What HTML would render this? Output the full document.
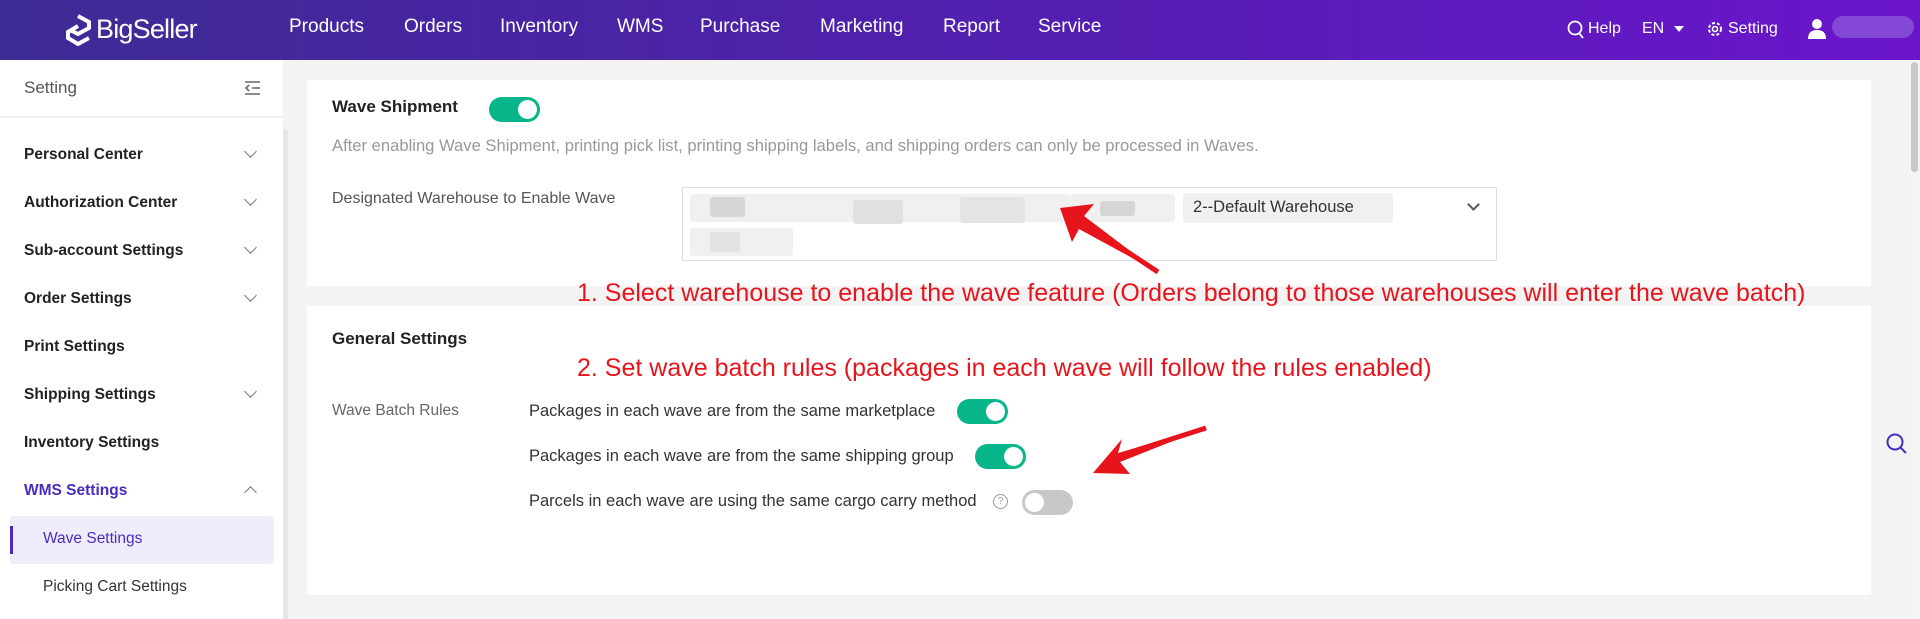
<!DOCTYPE html>
<html style="width:1920px;height:619px;overflow:hidden"><head><meta charset="utf-8"><style>
*{margin:0;padding:0;box-sizing:border-box}
body{width:1920px;height:619px;overflow:hidden;background:#f3f3f3;font-family:"Liberation Sans",sans-serif;position:relative;color:#333}
.abs{position:absolute;white-space:nowrap}
#top{position:absolute;left:0;top:0;width:1920px;height:60px;background:linear-gradient(90deg,#3e2b95 0%,#4c22a8 40%,#6a15cb 100%)}
.nav{position:absolute;top:16px;color:#fff;font-size:19px}
#side{position:absolute;left:0;top:60px;width:283px;height:559px;background:#fff;overflow:hidden}
.mi{position:absolute;left:24px;font-size:15.5px;font-weight:bold;color:#222}
.chev{position:absolute;left:246px;width:9px;height:9px;border-right:1.5px solid #777;border-bottom:1.5px solid #777;transform:rotate(45deg)}
.card{position:absolute;left:307px;width:1564px;background:#fff}
.tg{position:absolute;width:51px;height:25px;border-radius:13px;background:#06b58a}
.tg::after{content:"";position:absolute;right:3px;top:3px;width:19px;height:19px;border-radius:50%;background:#fff}
.tg.off{background:#c8c8c8}
.tg.off::after{left:3px;right:auto}
.red{position:absolute;color:#e8141c;font-size:25px;left:577px;white-space:nowrap}
.rule{position:absolute;left:529px;font-size:16.5px;color:#333}
.blk{position:absolute;background:#eee;border-radius:3px}
</style></head><body>
<div id="top">
<svg class="abs" style="left:64px;top:14px" width="28" height="32" viewBox="0 0 28 32"><path d="M14 2 L25 8 L25 14 L14 20 L8 17 M14 12 L4 18 L4 24 L14 30 L25 24" fill="none" stroke="#fff" stroke-width="4"/></svg>
<div class="abs" style="left:96px;top:14px;color:#fff;font-size:27px;letter-spacing:-0.8px">BigSeller</div>
<div class="nav" style="left:289px">Products</div>
<div class="nav" style="left:404px">Orders</div>
<div class="nav" style="left:500px">Inventory</div>
<div class="nav" style="left:617px">WMS</div>
<div class="nav" style="left:700px">Purchase</div>
<div class="nav" style="left:820px">Marketing</div>
<div class="nav" style="left:943px">Report</div>
<div class="nav" style="left:1038px">Service</div>
<svg class="abs" style="left:1567px;top:20px" width="18" height="20"><circle cx="8" cy="8" r="6.5" fill="none" stroke="#fff" stroke-width="1.8"/><path d="M12 13 L16 18" stroke="#fff" stroke-width="1.8"/></svg>
<div class="abs" style="left:1588px;top:20px;color:#fff;font-size:16px">Help</div>
<div class="abs" style="left:1642px;top:20px;color:#fff;font-size:16px">EN</div>
<div class="abs" style="left:1674px;top:26px;border-left:5px solid transparent;border-right:5px solid transparent;border-top:6px solid #fff"></div>
<svg class="abs" style="left:1706px;top:20px" width="18" height="18" viewBox="0 0 18 18"><circle cx="9" cy="9" r="6" fill="none" stroke="#fff" stroke-width="2" stroke-dasharray="3 2"/><circle cx="9" cy="9" r="2.5" fill="none" stroke="#fff" stroke-width="1.6"/></svg>
<div class="abs" style="left:1728px;top:20px;color:#fff;font-size:16px">Setting</div>
<svg class="abs" style="left:1807px;top:18px" width="20" height="22"><circle cx="10" cy="6" r="5" fill="#fff"/><path d="M1 21 Q1 12 10 12 Q19 12 19 21Z" fill="#fff"/></svg>
<div class="abs" style="left:1832px;top:16px;width:82px;height:22px;border-radius:11px;background:#8a55d8;opacity:.8"></div>
</div>
<div id="side">
<div class="abs" style="left:24px;top:18px;font-size:17px;color:#555">Setting</div>
<svg class="abs" style="left:244px;top:20px" width="18" height="16"><path d="M1 2H16M8 8H16M1 14H16M5 5L2 8L5 11" fill="none" stroke="#666" stroke-width="1.6"/></svg>
<div class="abs" style="left:0;top:56px;width:283px;height:2px;background:#f0f0f0"></div>
<div class="mi" style="top:86px">Personal Center</div><div class="chev" style="top:87px"></div>
<div class="mi" style="top:134px">Authorization Center</div><div class="chev" style="top:135px"></div>
<div class="mi" style="top:182px">Sub-account Settings</div><div class="chev" style="top:183px"></div>
<div class="mi" style="top:230px">Order Settings</div><div class="chev" style="top:231px"></div>
<div class="mi" style="top:278px">Print Settings</div>
<div class="mi" style="top:326px">Shipping Settings</div><div class="chev" style="top:327px"></div>
<div class="mi" style="top:374px">Inventory Settings</div>
<div class="mi" style="top:422px;color:#4a2bc2">WMS Settings</div><div class="chev" style="top:428px;transform:rotate(225deg)"></div>
<div class="abs" style="left:10px;top:456px;width:264px;height:48px;background:#efedfc;border-radius:4px"></div>
<div class="abs" style="left:10px;top:466px;width:3px;height:28px;background:#4a2bc2"></div>
<div class="abs" style="left:43px;top:470px;font-size:15.5px;color:#4a2bc2">Wave Settings</div>
<div class="abs" style="left:43px;top:518px;font-size:15.5px;color:#333">Picking Cart Settings</div>
</div>
<div class="abs" style="left:283px;top:130px;width:5px;height:489px;background:#e6e6e6"></div>
<div class="abs" style="left:1910px;top:60px;width:10px;height:559px;background:#f4f4f4"></div>
<div class="abs" style="left:1911px;top:62px;width:7px;height:110px;background:#c8c8c8;border-radius:4px"></div>
<svg class="abs" style="left:1885px;top:432px" width="24" height="24"><circle cx="10" cy="10" r="7.5" fill="none" stroke="#4a2bc2" stroke-width="2"/><path d="M15.5 15.5L21 21" stroke="#4a2bc2" stroke-width="2"/></svg>

<div class="card" style="top:80px;height:206px"></div>
<div class="card" style="top:306px;height:289px"></div>
<div class="abs" style="left:332px;top:97px;font-size:17px;font-weight:bold;color:#222">Wave Shipment</div>
<div class="tg" style="left:489px;top:97px"></div>
<div class="abs" style="left:332px;top:136px;font-size:16.6px;color:#999">After enabling Wave Shipment, printing pick list, printing shipping labels, and shipping orders can only be processed in Waves.</div>
<div class="abs" style="left:332px;top:190px;font-size:16px;color:#555">Designated Warehouse to Enable Wave</div>
<div class="abs" style="left:682px;top:187px;width:815px;height:74px;border:1px solid #ddd;background:#fff"></div>
<div class="blk" style="left:690px;top:194px;width:380px;height:28px;background:#f0f0f0"></div>
<div class="blk" style="left:710px;top:197px;width:35px;height:20px;background:#d6d6d6"></div>
<div class="blk" style="left:853px;top:200px;width:50px;height:24px;background:#e0e0e0"></div>
<div class="blk" style="left:960px;top:197px;width:65px;height:26px;background:#e4e4e4"></div>
<div class="blk" style="left:1070px;top:194px;width:105px;height:28px;background:#f0f0f0"></div>
<div class="blk" style="left:1100px;top:201px;width:35px;height:15px;background:#d6d6d6"></div>
<div class="blk" style="left:1183px;top:193px;width:210px;height:30px;background:#f0f0f0"></div>
<div class="abs" style="left:1193px;top:198px;font-size:16.5px;color:#333">2--Default Warehouse</div>
<div class="blk" style="left:690px;top:228px;width:103px;height:28px;background:#f0f0f0"></div>
<div class="blk" style="left:710px;top:232px;width:30px;height:20px;background:#e2e2e2"></div>
<div class="abs" style="left:1469px;top:200px;width:9px;height:9px;border-right:2px solid #555;border-bottom:2px solid #555;transform:rotate(45deg)"></div>

<div class="red" style="top:279px">1. Select warehouse to enable the wave feature (Orders belong to those warehouses will enter the wave batch)</div>
<svg class="abs" style="left:0;top:0" width="1920" height="619">
<path d="M1158 272 L1084 216 L1094 204 L1060 208 L1072 242 L1079 229 Z" fill="#e8141c"/>
<path d="M1158 272 L1079 220" stroke="#e8141c" stroke-width="5"/>
<path d="M1206 428 L1118 453 L1122 439 L1093 473 L1130 474 L1120 462 Z" fill="#e8141c"/>
<path d="M1206 428 L1112 458" stroke="#e8141c" stroke-width="5"/>
</svg>
<div class="abs" style="left:332px;top:329px;font-size:17px;font-weight:bold;color:#222">General Settings</div>
<div class="red" style="top:354px">2. Set wave batch rules (packages in each wave will follow the rules enabled)</div>
<div class="abs" style="left:332px;top:402px;font-size:15.5px;color:#666">Wave Batch Rules</div>
<div class="rule" style="top:402px">Packages in each wave are from the same marketplace</div>
<div class="tg" style="left:957px;top:399px"></div>
<div class="rule" style="top:447px">Packages in each wave are from the same shipping group</div>
<div class="tg" style="left:975px;top:444px"></div>
<div class="rule" style="top:492px">Parcels in each wave are using the same cargo carry method</div>
<div class="abs" style="left:993px;top:494px;width:15px;height:15px;border:1px solid #999;border-radius:50%;font-size:10px;color:#999;text-align:center;line-height:13px">?</div>
<div class="tg off" style="left:1022px;top:490px"></div>
</body></html>
